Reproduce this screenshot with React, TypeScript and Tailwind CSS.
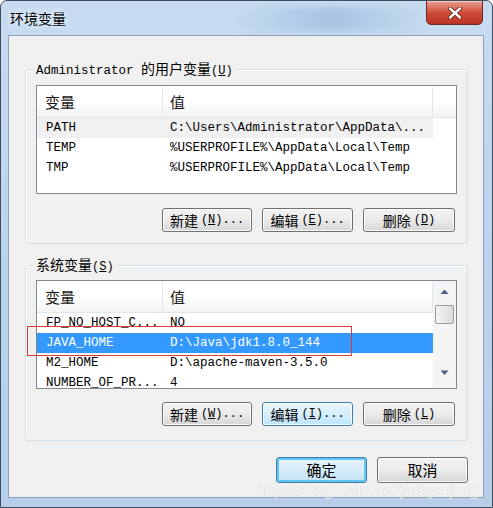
import React from 'react';

interface Row {
    name: string;
    value: string;
}

const userRows: Row[] = [
    { name: 'PATH', value: 'C:\\Users\\Administrator\\AppData\\...' },
    { name: 'TEMP', value: '%USERPROFILE%\\AppData\\Local\\Temp' },
    { name: 'TMP', value: '%USERPROFILE%\\AppData\\Local\\Temp' },
];

const systemRows: Row[] = [
    { name: 'FP_NO_HOST_C...', value: 'NO' },
    { name: 'JAVA_HOME', value: 'D:\\Java\\jdk1.8.0_144' },
    { name: 'M2_HOME', value: 'D:\\apache-maven-3.5.0' },
    { name: 'NUMBER_OF_PR...', value: '4' },
];

const mono = 'font-["Liberation_Mono","Noto_Sans_CJK_SC",monospace]';
const cjk = 'font-["Noto_Sans_CJK_SC","Liberation_Sans",sans-serif]';

const Btn: React.FC<{ label: string; hot: string; dots?: boolean; hover?: boolean; className?: string }> = ({
    label,
    hot,
    dots,
    hover,
    className,
}) => (
    <div
        className={
            'flex h-[24px] items-center justify-center rounded-[3px] border text-[14px] leading-none text-black shadow-[inset_0_0_0_1px_#fcfcfc] ' +
            cjk +
            ' ' +
            (hover
                ? 'border-[#3c7fb1] bg-gradient-to-b from-[#eaf6fd] to-[#bee6fd]'
                : 'border-[#707070] bg-gradient-to-b from-[#f2f2f2] via-[#ebebeb] to-[#d6d6d6]') +
            ' ' +
            (className ?? '')
        }
    >
        <span>{label}</span>
        <span className={'ml-[3px] text-[12px] ' + mono}>
            (<span className="underline">{hot}</span>){dots ? '...' : ''}
        </span>
    </div>
);

const VarList: React.FC<{ rows: Row[]; selected: number; active: boolean; scroll?: boolean }> = ({
    rows,
    selected,
    active,
    scroll,
}) => (
    <div className="flex h-[109px] w-[421px] overflow-hidden border border-[#828790] bg-white">
        <div className="w-[396px] shrink-0">
            <div className={'flex h-[32px] items-center border-b border-[#e2e5ea] bg-gradient-to-b from-white via-white to-[#f2f3f5] pt-[1px] text-[15px] text-[#1a1a1a] ' + cjk}>
                <div className="flex h-full w-[126px] items-center border-r border-[#e3e5e8] pl-[8px]">变量</div>
                <div className="flex h-full flex-1 items-center border-r border-[#e3e5e8] pl-[7px]">值</div>
            </div>
            {rows.map((r, i) => {
                const sel = i === selected;
                const bg = sel ? (active ? 'bg-[#3399ff] text-white' : 'bg-[#f0f0f0] text-black') : 'text-black';
                return (
                    <div key={r.name} className={'flex h-[20px] items-center pt-[1px] text-[12.5px] whitespace-nowrap ' + mono + ' ' + bg}>
                        <div className="w-[126px] pl-[9px]">{r.name}</div>
                        <div className="pl-[7px]">{r.value}</div>
                    </div>
                );
            })}
        </div>
        {scroll ? (
            <div className="flex w-[23px] flex-col items-center bg-[#f4f4f4] pt-[8px]">
                <svg width="9" height="6" viewBox="0 0 9 6">
                    <path d="M4.5 0.5 L8.5 5 L0.5 5 Z" fill="#4d6185" />
                </svg>
                <div className="mt-[10px] h-[19px] w-[19px] rounded-[2px] border border-[#9b9b9b] bg-gradient-to-r from-[#f5f5f5] to-[#dcdcdc]" />
                <div className="flex-1" />
                <svg width="9" height="6" viewBox="0 0 9 6" className="mb-[12px]">
                    <path d="M0.5 0.5 L8.5 0.5 L4.5 5 Z" fill="#4d6185" />
                </svg>
            </div>
        ) : (
            <div className="h-[32px] flex-1 border-b border-[#e2e5ea] bg-gradient-to-b from-white via-white to-[#f2f3f5]" />
        )}
    </div>
);

const Group: React.FC<{ label: React.ReactNode; className?: string; children: React.ReactNode }> = ({
    label,
    className,
    children,
}) => (
    <div
        className={
            'relative ml-[16px] mr-[15px] rounded-[3px] border border-[#d5dfe5] pl-[10px] pr-[11px] shadow-[inset_1px_1px_0_#ffffff] ' +
            (className ?? '')
        }
    >
        <div className="absolute left-[8px] top-[-11px] bg-[#f0f0f0] px-[2px] text-[13px] leading-[18px] text-black">
            {label}
        </div>
        {children}
    </div>
);

export default function App() {
    return (
        <div className="relative h-[508px] w-[493px] overflow-hidden rounded-t-[7px] border border-[#3d4d60] bg-gradient-to-b from-[#c8dcf1] via-[#bcd3ec] to-[#b6cee8]">
            <div className="pointer-events-none absolute left-[230px] top-[6px] h-[24px] w-[200px] rounded-full bg-gradient-to-r from-transparent via-[#93b4dc] to-transparent opacity-60 blur-[3px]" />
            <div className="relative flex h-[34px] items-center pl-[9px]">
                <span className={'text-[14px] text-black [text-shadow:0_0_6px_#ffffff] ' + cjk}>环境变量</span>
            </div>
            <div className="absolute right-[9px] top-[-1px] flex h-[25px] w-[57px] items-center justify-center rounded-b-[5px] border border-[#6e2a22] bg-gradient-to-b from-[#e5a091] via-[#cf4c3a] to-[#b93322] shadow-[inset_0_1px_0_#f3c8bd]">
                <svg width="14" height="12" viewBox="0 0 14 12">
                    <path d="M2 1.5 L12 10.5 M12 1.5 L2 10.5" stroke="#5a1c14" strokeWidth="4" strokeLinecap="round" />
                    <path d="M2 1.5 L12 10.5 M12 1.5 L2 10.5" stroke="#ffffff" strokeWidth="2.4" strokeLinecap="round" />
                </svg>
            </div>

            <div className="ml-[7px] mr-[8px] flex h-[463px] flex-col border border-[#8da2ba] bg-[#f0f0f0]">
                <Group
                    className="mt-[33px] h-[175px] pt-[15px]"
                    label={
                        <span>
                            <span className={mono + ' text-[12.5px]'}>Administrator </span>
                            <span className={cjk + ' text-[14px]'}>的用户变量</span>
                            <span className={mono + ' text-[12px]'}>
                                (<span className="underline">U</span>)
                            </span>
                        </span>
                    }
                >
                    <VarList rows={userRows} selected={0} active={false} />
                    <div className="mt-[14px] flex justify-end gap-[10px] pr-[1px]">
                        <Btn label="新建" hot="N" dots className="w-[90px]" />
                        <Btn label="编辑" hot="E" dots className="w-[91px]" />
                        <Btn label="删除" hot="D" className="w-[92px]" />
                    </div>
                </Group>

                <Group
                    className="mt-[21px] h-[176px] pt-[14px]"
                    label={
                        <span>
                            <span className={cjk + ' text-[14px]'}>系统变量</span>
                            <span className={mono + ' text-[12px]'}>
                                (<span className="underline">S</span>)
                            </span>
                        </span>
                    }
                >
                    <VarList rows={systemRows} selected={1} active scroll />
                    <div className="mt-[13px] flex justify-end gap-[10px] pr-[1px]">
                        <Btn label="新建" hot="W" dots className="w-[90px]" />
                        <Btn label="编辑" hot="I" dots hover className="w-[91px]" />
                        <Btn label="删除" hot="L" className="w-[92px]" />
                    </div>
                </Group>

                <div className="mr-[15px] mt-[16px] flex justify-end gap-[10px]">
                    <div
                        className={
                            'flex h-[26px] w-[91px] items-center justify-center rounded-[3px] border border-[#3c7fb1] bg-gradient-to-b from-[#e8f4fc] to-[#c3e2f5] text-[15px] text-black shadow-[inset_0_0_0_2px_#64c4f0] ' +
                            cjk
                        }
                    >
                        确定
                    </div>
                    <div
                        className={
                            'flex h-[26px] w-[91px] items-center justify-center rounded-[3px] border border-[#707070] bg-gradient-to-b from-[#f2f2f2] via-[#ebebeb] to-[#d6d6d6] text-[15px] text-black shadow-[inset_0_0_0_1px_#fcfcfc] ' +
                            cjk
                        }
                    >
                        取消
                    </div>
                </div>
            </div>

            <div className="pointer-events-none absolute left-[26px] top-[325px] h-[30px] w-[325px] border-[1.5px] border-[#e0393b]" />
            <div className="pointer-events-none absolute left-[256px] top-[478px] text-[15.5px] whitespace-nowrap text-white opacity-70 [text-shadow:0_0_1px_#9a9a9a] font-['Liberation_Sans',sans-serif]">
                https://blog.csdn.net/jackyerjung
            </div>
        </div>
    );
}
